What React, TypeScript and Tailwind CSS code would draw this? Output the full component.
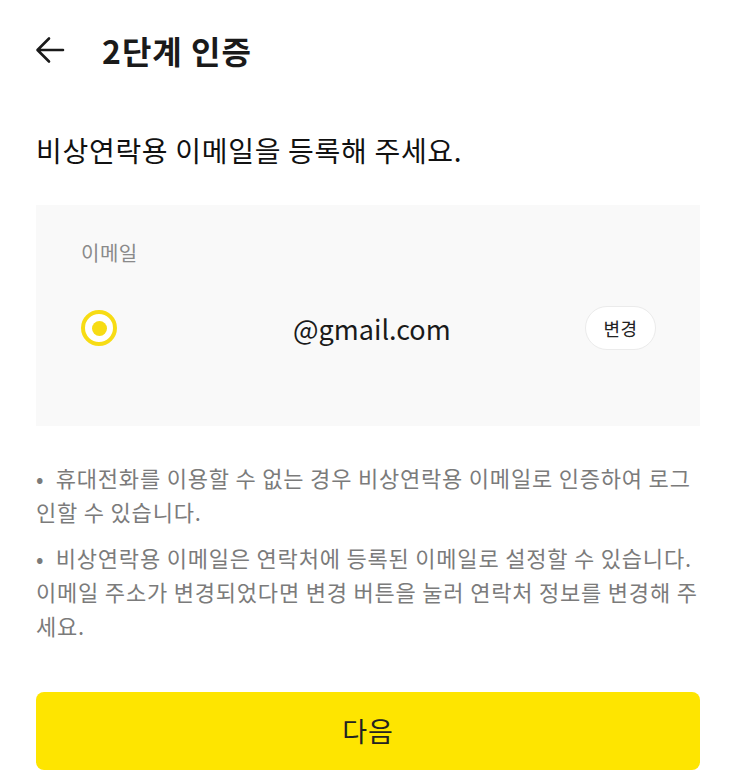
import React from "react";

const font = { fontFamily: '"Noto Sans CJK KR", "Noto Sans", sans-serif' };

const BackArrow = () => (
  <svg width="30" height="30" viewBox="0 0 30 30" fill="none">
    <path
      d="M28 15H3M14 3.5L2.5 15L14 26.5"
      stroke="#1a1a1a"
      strokeWidth="2.6"
      strokeLinecap="round"
      strokeLinejoin="round"
    />
  </svg>
);

export default function App() {
  return (
    <div className="w-[733px] h-[784px] bg-white overflow-hidden" style={font}>
      {/* Header */}
      <div className="h-[100px] flex items-center pl-[35px]">
        <BackArrow />
        <h1 className="ml-[37px] text-[32px] leading-none font-bold text-[#1a1a1a] tracking-[1px]">
          2단계 인증
        </h1>
      </div>

      {/* Subtitle */}
      <p className="mt-[31px] px-[36px] text-[28px] leading-[38px] text-[#111] tracking-[0.7px] whitespace-nowrap">
        비상연락용 이메일을 등록해 주세요.
      </p>

      {/* Email box */}
      <div className="mt-[36px] ml-[36px] w-[664px] h-[221px] bg-[#f9f9f9] pt-[34px] pl-[45px] pr-[44px]">
        <div className="text-[20px] leading-[28px] text-[#8a8a8a] tracking-[0.5px]">이메일</div>
        <div className="mt-[39px] h-[44px] flex items-center">
          <span className="w-[36px] h-[36px] rounded-full border-[4px] border-[#f7dc14] bg-white flex items-center justify-center shrink-0">
            <span className="w-[15px] h-[15px] rounded-full bg-[#f7dc14]" />
          </span>
          <span className="ml-[176px] text-[27px] leading-none text-[#1a1a1a]">
            @gmail.com
          </span>
          <button className="ml-auto w-[71px] h-[44px] rounded-full bg-white border border-[#ebebeb] text-[18px] text-[#222] flex items-center justify-center tracking-[0.5px]">
            변경
          </button>
        </div>
      </div>

      {/* Notes */}
      <div className="mt-[34px] px-[36px] text-[22px] leading-[34px] text-[#7b7b7b] tracking-[0.8px] whitespace-nowrap">
        <p>
          •&nbsp; 휴대전화를 이용할 수 없는 경우 비상연락용 이메일로 인증하여 로그
          <br />
          인할 수 있습니다.
        </p>
        <p className="mt-[12px]">
          •&nbsp; 비상연락용 이메일은 연락처에 등록된 이메일로 설정할 수 있습니다.
          <br />
          이메일 주소가 변경되었다면 변경 버튼을 눌러 연락처 정보를 변경해 주
          <br />
          세요.
        </p>
      </div>

      {/* Next button */}
      <div className="mt-[50px] pl-[36px]">
        <button className="w-[664px] h-[78px] rounded-[8px] bg-[#fee500] text-[27px] text-[#222] tracking-[1px] flex items-center justify-center">
          다음
        </button>
      </div>
    </div>
  );
}
